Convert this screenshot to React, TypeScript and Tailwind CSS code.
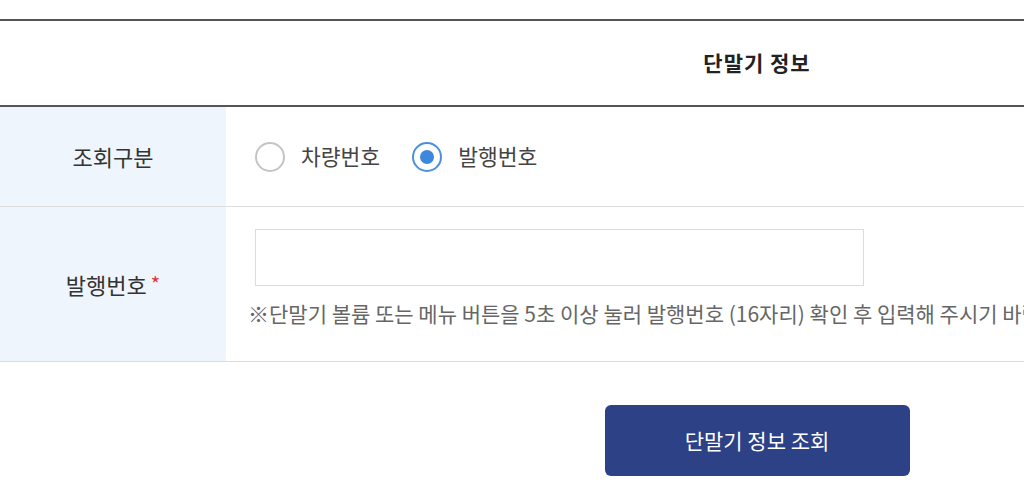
import {useState} from 'react';

const font = {fontFamily: '"Noto Sans CJK KR", "Noto Sans", sans-serif'}

type RadioProps = {
    label: string
    checked: boolean
    onClick: () => void
}

function Radio({label, checked, onClick}: RadioProps) {
    return (
        <button type="button" onClick={onClick} className="flex items-center gap-4">
            <span className={"w-[30px] h-[30px] rounded-full flex items-center justify-center bg-white " + (checked ? "border-2 border-[#4a8fe0]" : "border-2 border-[#c4c4c4]")}>
                {checked && <span className="w-[14px] h-[14px] rounded-full bg-[#3d87dd]" />}
            </span>
            <span className="text-[21.5px] text-[#444]">{label}</span>
        </button>
    )
}

export default function App() {
    const [type, setType] = useState('issue')
    const [serial, setSerial] = useState('')

    return (
        <div className="w-full overflow-hidden bg-white" style={font}>
            <div className="w-[1514px] pt-[19px]">
                <div className="border-t-2 border-b-2 border-[#555] h-[88px] flex items-center justify-center">
                    <h2 className="text-[21px] font-bold text-[#222] tracking-[1px]">단말기 정보</h2>
                </div>

                <div className="flex border-b border-[#dddddd] h-[100px]">
                    <div className="w-[226px] bg-[#eef5fc] flex items-center justify-center text-[22px] text-[#333]">조회구분</div>
                    <div className="flex-1 flex items-center gap-8 pl-[29px]">
                        <Radio label="차량번호" checked={type === 'car'} onClick={() => setType('car')} />
                        <Radio label="발행번호" checked={type === 'issue'} onClick={() => setType('issue')} />
                    </div>
                </div>

                <div className="flex border-b border-[#dddddd] h-[155px]">
                    <div className="w-[226px] bg-[#eef5fc] flex items-center justify-center text-[22px] text-[#333]">
                        발행번호<span className="text-[#e5323c] ml-1 text-[20px]">*</span>
                    </div>
                    <div className="flex-1 pl-[29px] pt-[22px]">
                        <input className="w-[609px] h-[57px] border border-[#dcdcdc] outline-none px-4 text-[18px]" value={serial} onChange={(e) => {setSerial(e.target.value)}} />
                        <p className="mt-[12px] -ml-[7px] text-[21px] text-[#666] whitespace-nowrap">※단말기 볼륨 또는 메뉴 버튼을 5초 이상 눌러 발행번호 (16자리) 확인 후 입력해 주시기 바랍니다.</p>
                    </div>
                </div>

                <div className="flex justify-center pt-[43px] pb-10">
                    <button type="button" className="w-[305px] h-[71px] rounded-md bg-[#2c4186] text-white text-[21px]">단말기 정보 조회</button>
                </div>
            </div>
        </div>
    )
}
